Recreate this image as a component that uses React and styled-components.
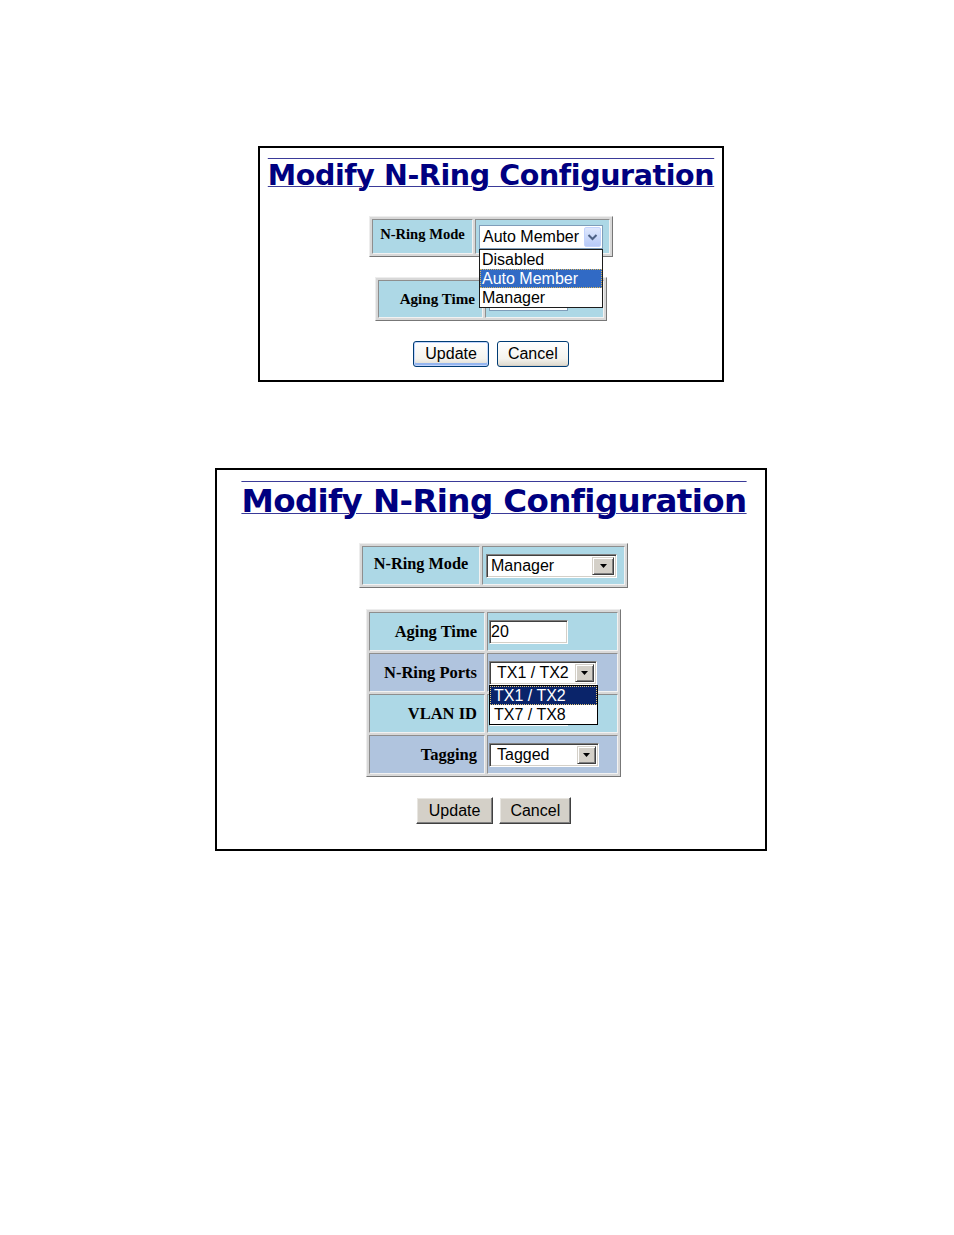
import React from "react";
import styled, { createGlobalStyle } from "styled-components";

const GlobalStyle = createGlobalStyle`
  html, body { margin: 0; padding: 0; background: #fff; }
  body { font-family: "Liberation Sans", Arial, sans-serif; }
`;

const Page = styled.div`
  display: flex;
  flex-direction: column;
  align-items: center;
  padding: 146px 0 0 28px;
  gap: 86px;
`;

const Panel = styled.div`
  box-sizing: border-box;
  width: ${(p) => p.$w}px;
  height: ${(p) => p.$h}px;
  border: 2px solid #000;
  display: flex;
  flex-direction: column;
  align-items: center;
  padding-top: ${(p) => p.$pt}px;
`;

const Title = styled.h1`
  margin: 0 0 0 ${(p) => p.$ml || 0}px;
  font-family: "DejaVu Sans", Verdana, sans-serif;
  font-weight: bold;
  font-size: ${(p) => p.$size}px;
  line-height: ${(p) => p.$lh}px;
  letter-spacing: ${(p) => p.$ls || 0}px;
  color: #000080;
  text-decoration: underline overline;
  text-decoration-thickness: 1px;
  text-decoration-color: #3a3a98;
  white-space: nowrap;
`;

const Table = styled.div`
  position: relative;
  display: grid;
  grid-template-columns: ${(p) => p.$cols};
  grid-auto-rows: ${(p) => p.$row}px;
  gap: 2px;
  padding: 2px;
  margin: ${(p) => p.$mt}px 0 0 ${(p) => p.$ml || 0}px;
  background: #d8d8d8;
  border: 1px solid;
  border-color: #ededed #777 #777 #ededed;
`;

const LabelCell = styled.div`
  box-sizing: border-box;
  background: ${(p) => p.$bg || "#add8e6"};
  border: 1px solid;
  border-color: #8e8e8e #f2f2f2 #f2f2f2 #8e8e8e;
  display: flex;
  align-items: center;
  justify-content: ${(p) => (p.$center ? "center" : "flex-end")};
  padding: ${(p) => (p.$center ? "0 0 4px 0" : "0 7px 0 0")};
  font-family: "Liberation Serif", "Times New Roman", serif;
  font-weight: bold;
  font-size: ${(p) => p.$fs}px;
  color: #000;
  white-space: nowrap;
`;

const ValueCell = styled.div`
  box-sizing: border-box;
  background: ${(p) => p.$bg || "#add8e6"};
  border: 1px solid;
  border-color: #8e8e8e #f2f2f2 #f2f2f2 #8e8e8e;
  display: flex;
  align-items: center;
  padding-left: ${(p) => p.$pl}px;
`;

/* XP style select */
const XpSelect = styled.div`
  position: relative;
  box-sizing: border-box;
  width: ${(p) => p.$w}px;
  height: 24px;
  border: 1px solid #7f9db9;
  background: #fff;
  display: flex;
  align-items: center;
  padding-left: 3px;
  font-size: 16px;
  color: #000;
  white-space: nowrap;
`;

const XpArrow = styled.span`
  margin-left: auto;
  margin-right: 1px;
  box-sizing: border-box;
  width: 17px;
  height: 20px;
  border: 1px solid #c3d3fd;
  border-radius: 2px;
  background: linear-gradient(#dfe8fd, #b7caf7);
  display: flex;
  align-items: center;
  justify-content: center;
`;

const XpList = styled.div`
  position: absolute;
  z-index: 10;
  top: calc(100% + 1px);
  left: -1px;
  box-sizing: border-box;
  width: ${(p) => p.$w}px;
  border: 1px solid #1c1c1c;
  background: #fff;
`;

const XpItem = styled.div`
  box-sizing: border-box;
  height: 19px;
  line-height: 19px;
  padding-left: 2px;
  font-size: 16px;
  color: ${(p) => (p.$sel ? "#fff" : "#000")};
  background: ${(p) => (p.$sel ? "#316ac5" : "#fff")};
  outline: ${(p) => (p.$sel ? "1px dotted #d9b45c" : "none")};
  outline-offset: -1px;
`;

const XpInput = styled.input`
  box-sizing: border-box;
  width: 79px;
  height: 24px;
  border: 1px solid #7f9db9;
  background: #fff;
  margin: 0;
  padding: 0 2px;
`;

/* classic style select */
const ClassicSelect = styled.div`
  position: relative;
  box-sizing: border-box;
  width: ${(p) => p.$w}px;
  height: 24px;
  background: #fff;
  border: 1px solid;
  border-color: #808080 #fff #fff #808080;
  box-shadow: inset 1px 1px 0 #404040, inset -1px -1px 0 #d4d0c8;
  display: flex;
  align-items: center;
  padding: 0 2px 0 ${(p) => p.$pl}px;
  font-size: 16px;
  color: #000;
  white-space: nowrap;
`;

const ClassicArrow = styled.span`
  margin-left: auto;
  box-sizing: border-box;
  width: ${(p) => p.$w || 18}px;
  height: 18px;
  background: #d4d0c8;
  border: 1px solid;
  border-color: #d4d0c8 #404040 #404040 #d4d0c8;
  box-shadow: inset 1px 1px 0 #fff, inset -1px -1px 0 #808080;
  display: flex;
  align-items: center;
  justify-content: center;
`;

const ClassicList = styled.div`
  position: absolute;
  z-index: 10;
  top: calc(100% + 1px);
  left: -1px;
  box-sizing: border-box;
  width: ${(p) => p.$w}px;
  border: 1px solid #000;
  background: #fff;
`;

const ClassicItem = styled.div`
  box-sizing: border-box;
  height: 19px;
  line-height: 19px;
  padding-left: 4px;
  font-size: 16px;
  color: ${(p) => (p.$sel ? "#fff" : "#000")};
  background: ${(p) => (p.$sel ? "#0a246a" : "#fff")};
  outline: ${(p) => (p.$sel ? "1px dotted #e2c67a" : "none")};
  outline-offset: -1px;
`;

const ClassicInput = styled.input`
  box-sizing: border-box;
  width: 79px;
  height: 24px;
  margin: 0;
  padding: 0 1px;
  background: #fff;
  border: 1px solid;
  border-color: #808080 #fff #fff #808080;
  box-shadow: inset 1px 1px 0 #404040, inset -1px -1px 0 #d4d0c8;
  font-family: "Liberation Sans", Arial, sans-serif;
  font-size: 16px;
  color: #000;
  outline: none;
`;

const ButtonRow = styled.div`
  display: flex;
  gap: ${(p) => p.$gap}px;
  margin: ${(p) => p.$mt}px 0 0 ${(p) => p.$ml || 0}px;
`;

const XpButton = styled.button`
  box-sizing: border-box;
  height: 26px;
  padding: 0 ${(p) => p.$px}px;
  font-family: "Liberation Sans", Arial, sans-serif;
  font-size: 16px;
  color: #000;
  border: 1px solid #003c74;
  border-radius: 3px;
  background: linear-gradient(#ffffff, #f4f3ee 70%, #dcd8cc);
  box-shadow: ${(p) =>
    p.$default
      ? "inset 0 0 0 1px #c2d5fc, inset 0 -2px 0 1px #95b6f0"
      : "inset 0 -1px 0 #d6d0c5"};
`;

const ClassicButton = styled.button`
  box-sizing: border-box;
  height: 27px;
  padding: 0 ${(p) => p.$px}px;
  font-family: "Liberation Sans", Arial, sans-serif;
  font-size: 16px;
  color: #000;
  background: #d4d0c8;
  border: 1px solid;
  border-color: #fff #404040 #404040 #fff;
  box-shadow: inset -1px -1px 0 #808080, inset 1px 1px 0 #e8e6e1;
`;

const Chevron = () => (
  <svg width="11" height="8" viewBox="0 0 11 8">
    <path d="M1.5 2 L5.5 6 L9.5 2" fill="none" stroke="#4d6185" strokeWidth="2" />
  </svg>
);

const Triangle = () => (
  <svg width="7" height="4" viewBox="0 0 7 4">
    <polygon points="0,0 7,0 3.5,4" fill="#000" />
  </svg>
);

export default function App() {
  return (
    <>
      <GlobalStyle />
      <Page>
        <Panel $w={466} $h={236} $pt={10}>
          <Title $size={28.5} $lh={36} $ls={-0.4}>
            Modify N-Ring Configuration
          </Title>
          <Table $cols="101px 135px" $row={35} $mt={22}>
            <LabelCell $center $fs={14.6}>N-Ring Mode</LabelCell>
            <ValueCell $pl={3}>
              <XpSelect $w={124}>
                Auto Member
                <XpArrow>
                  <Chevron />
                </XpArrow>
                <XpList $w={124}>
                  <XpItem>Disabled</XpItem>
                  <XpItem $sel>Auto Member</XpItem>
                  <XpItem>Manager</XpItem>
                </XpList>
              </XpSelect>
            </ValueCell>
          </Table>
          <Table $cols="105px 119px" $row={38} $mt={20}>
            <LabelCell $fs={15.1}>Aging Time</LabelCell>
            <ValueCell $pl={3}>
              <XpInput readOnly defaultValue="" />
            </ValueCell>
          </Table>
          <ButtonRow $gap={8} $mt={20}>
            <XpButton $default $px={11}>Update</XpButton>
            <XpButton $px={10}>Cancel</XpButton>
          </ButtonRow>
        </Panel>

        <Panel $w={552} $h={383} $pt={11}>
          <Title $size={32.5} $lh={40} $ml={6} $ls={-0.6}>
            Modify N-Ring Configuration
          </Title>
          <Table $cols="118px 143px" $row={39} $mt={22} $ml={5}>
            <LabelCell $center $fs={16.3}>N-Ring Mode</LabelCell>
            <ValueCell $pl={3}>
              <ClassicSelect $w={131} $pl={4}>
                Manager
                <ClassicArrow $w={22}>
                  <Triangle />
                </ClassicArrow>
              </ClassicSelect>
            </ValueCell>
          </Table>
          <Table $cols="116px 131px" $row={39} $mt={21} $ml={5}>
            <LabelCell $fs={16.5}>Aging Time</LabelCell>
            <ValueCell $pl={1}>
              <ClassicInput readOnly defaultValue="20" />
            </ValueCell>
            <LabelCell $fs={16.5} $bg="#b0c4de">N-Ring Ports</LabelCell>
            <ValueCell $pl={1} $bg="#b0c4de">
              <ClassicSelect $w={108} $pl={7}>
                TX1 / TX2
                <ClassicArrow $w={19}>
                  <Triangle />
                </ClassicArrow>
                <ClassicList $w={109}>
                  <ClassicItem $sel>TX1 / TX2</ClassicItem>
                  <ClassicItem>TX7 / TX8</ClassicItem>
                </ClassicList>
              </ClassicSelect>
            </ValueCell>
            <LabelCell $fs={16.5}>VLAN ID</LabelCell>
            <ValueCell $pl={1}>
              <ClassicInput readOnly defaultValue="" />
            </ValueCell>
            <LabelCell $fs={16.5} $bg="#b0c4de">Tagging</LabelCell>
            <ValueCell $pl={1} $bg="#b0c4de">
              <ClassicSelect $w={110} $pl={7}>
                Tagged
                <ClassicArrow $w={19}>
                  <Triangle />
                </ClassicArrow>
              </ClassicSelect>
            </ValueCell>
          </Table>
          <ButtonRow $gap={6} $mt={20} $ml={5}>
            <ClassicButton $px={12}>Update</ClassicButton>
            <ClassicButton $px={10}>Cancel</ClassicButton>
          </ButtonRow>
        </Panel>
      </Page>
    </>
  );
}
